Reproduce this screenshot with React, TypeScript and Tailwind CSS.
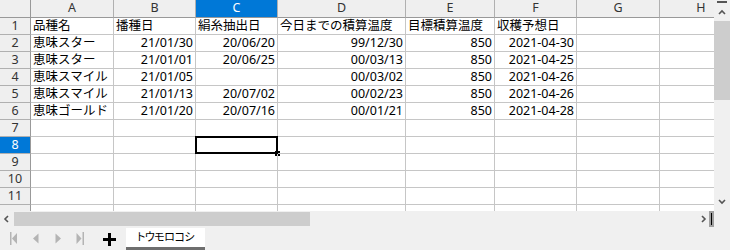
import React from "react";

const COLS = ["A", "B", "C", "D", "E", "F", "G", "H"];
const WIDTHS = ["w-[83px]", "w-[82px]", "w-[82px]", "w-[128px]", "w-[89px]", "w-[82px]", "w-[83px]", "w-[83px]"];

type Cell = { t: string; r?: boolean };
const L = (t: string): Cell => ({ t });
const R = (t: string): Cell => ({ t, r: true });

const DATA: Cell[][] = [
  [L("品種名"), L("播種日"), L("絹糸抽出日"), L("今日までの積算温度"), L("目標積算温度"), L("収穫予想日")],
  [L("恵味スター"), R("21/01/30"), R("20/06/20"), R("99/12/30"), R("850"), R("2021-04-30")],
  [L("恵味スター"), R("21/01/01"), R("20/06/25"), R("00/03/13"), R("850"), R("2021-04-25")],
  [L("恵味スマイル"), R("21/01/05"), L(""), R("00/03/02"), R("850"), R("2021-04-26")],
  [L("恵味スマイル"), R("21/01/13"), R("20/07/02"), R("00/02/23"), R("850"), R("2021-04-26")],
  [L("恵味ゴールド"), R("21/01/20"), R("20/07/16"), R("00/01/21"), R("850"), R("2021-04-28")],
];

const FONT = "[font-family:'Noto_Sans','Noto_Sans_CJK_JP',sans-serif]";

function Chevron({ dir }: { dir: "up" | "down" | "left" | "right" }) {
  const pts =
    dir === "up"
      ? "1,5 4,2 7,5"
      : dir === "down"
      ? "1,2 4,5 7,2"
      : dir === "left"
      ? "5,1 2,4 5,7"
      : "2,1 5,4 2,7";
  return (
    <svg width="8" height="8" viewBox="0 0 8 8">
      <polyline points={pts} fill="none" stroke="#555" strokeWidth="1.6" />
    </svg>
  );
}

function NavIcon({ kind }: { kind: "first" | "prev" | "next" | "last" }) {
  return (
    <svg width="8" height="13" viewBox="0 0 8 13">
      {kind === "first" && (
        <>
          <rect x="0" y="0" width="1.5" height="13" fill="#b4b4b4" />
          <polygon points="7,1 2,6.5 7,12" fill="#b4b4b4" />
        </>
      )}
      {kind === "prev" && <polygon points="6.5,1.5 1,6.5 6.5,11.5" fill="#b4b4b4" />}
      {kind === "next" && <polygon points="1.5,1.5 7,6.5 1.5,11.5" fill="#b4b4b4" />}
      {kind === "last" && (
        <>
          <polygon points="0.5,1 5.5,6.5 0.5,12" fill="#b4b4b4" />
          <rect x="6.5" y="0" width="1.5" height="13" fill="#b4b4b4" />
        </>
      )}
    </svg>
  );
}

export default function App() {
  const rows = Array.from({ length: 12 }, (_, i) => i + 1);
  return (
    <div className={`w-[730px] h-[250px] flex flex-col bg-[#f0f0f0] overflow-hidden ${FONT}`}>
      {/* main area */}
      <div className="flex h-[211px]">
        <div className="w-[714px] h-[211px] overflow-hidden bg-white">
          <div className="w-max">
            {/* column header */}
            <div className="flex h-[18px]">
              <div className="w-[31px] shrink-0 bg-[#efefef] border-r border-b border-[#999]" />
              {COLS.map((c, i) => {
                const sel = c === "C";
                return (
                  <div
                    key={c}
                    className={`${WIDTHS[i]} shrink-0 flex items-center justify-center text-[12.5px] border-r border-b ${
                      sel ? "bg-[#0078d7] text-white border-r-[#b0b0b0] border-b-[#999]" : "bg-[#efefef] text-[#333] border-r-[#b0b0b0] border-b-[#999]"
                    }`}
                  >
                    {c}
                  </div>
                );
              })}
            </div>
            {rows.map((r) => {
              const sel = r === 8;
              const data = DATA[r - 1] || [];
              return (
                <div key={r} className="flex h-[17px]">
                  <div
                    className={`w-[31px] shrink-0 flex items-center justify-center text-[12.5px] border-r border-b border-r-[#999] border-b-[#b0b0b0] ${
                      sel ? "bg-[#0078d7] text-white" : "bg-[#efefef] text-[#333]"
                    }`}
                  >
                    {r <= 11 ? r : ""}
                  </div>
                  {COLS.map((c, i) => {
                    const cell = data[i];
                    const isSel = r === 8 && c === "C";
                    return (
                      <div
                        key={c}
                        className={`${WIDTHS[i]} shrink-0 relative flex items-center px-[2px] text-[12.5px] text-black whitespace-nowrap border-r border-b border-[#c6c6c6] ${
                          cell && cell.r ? "justify-end" : "justify-start"
                        }`}
                      >
                        {cell ? cell.t : ""}
                        {isSel && (
                          <>
                            <div className="absolute -top-[1px] -left-[1px] -right-[1px] -bottom-[1px] border-2 border-black" />
                            <div className="absolute -right-[3px] -bottom-[3px] w-[5px] h-[5px] bg-black" />
                          </>
                        )}
                      </div>
                    );
                  })}
                </div>
              );
            })}
          </div>
        </div>
        {/* vertical scrollbar */}
        <div className="w-[16px] h-[211px] flex flex-col bg-[#f0f0f0]">
          <div className="h-[4px] flex justify-center items-start pt-[1px]">
            <div className="w-[10px] h-[2px] bg-[#555]" />
          </div>
          <div className="h-[17px] flex items-center justify-center">
            <Chevron dir="up" />
          </div>
          <div className="h-[79px] bg-[#cdcdcd]" />
          <div className="flex-1" />
          <div className="h-[17px] flex items-center justify-center pb-[2px]">
            <Chevron dir="down" />
          </div>
        </div>
      </div>
      {/* horizontal scrollbar */}
      <div className="flex h-[16px] items-center">
        <div className="w-[14px] flex items-center justify-center">
          <Chevron dir="left" />
        </div>
        <div className="w-[296px] h-[14px] bg-[#cdcdcd]" />
        <div className="flex-1" />
        <div className="w-[10px] flex items-center justify-center">
          <Chevron dir="right" />
        </div>
        <div className="w-[5px] h-[16px] bg-[#a0a0a0] flex justify-center items-center mr-[16px]">
          <div className="w-[1px] h-[12px] bg-black" />
        </div>
      </div>
      {/* tab bar */}
      <div className="flex h-[23px] items-stretch">
        <div className="flex items-center pl-[10px] gap-[14px] w-[92px]">
          <NavIcon kind="first" />
          <NavIcon kind="prev" />
          <NavIcon kind="next" />
          <NavIcon kind="last" />
        </div>
        <div className="w-[34px] flex items-center justify-center pt-[2px]">
          <svg width="13" height="13" viewBox="0 0 13 13">
            <rect x="5" y="0" width="3" height="13" fill="#000" />
            <rect x="0" y="5" width="13" height="3" fill="#000" />
          </svg>
        </div>
        <div className="w-[79px] mt-[1px] bg-white flex flex-col">
          <div className="flex-1 flex items-center justify-center text-[11px] text-black [font-feature-settings:'palt'] tracking-[-0.5px]">
            トウモロコシ
          </div>
          <div className="h-[3px] bg-[#6e6e6e]" />
        </div>
      </div>
    </div>
  );
}
